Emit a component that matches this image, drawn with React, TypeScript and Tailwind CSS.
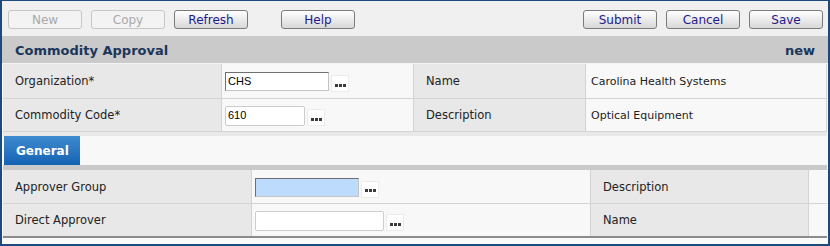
import React from 'react'

const LABEL = "bg-[#e8e8e8] border-r border-[#d4d4d4] flex items-center pl-[12px] pt-[2px] text-[11.5px] text-[#222]"
const VALUE = "bg-[#f8f8f8] border-r border-[#d4d4d4] flex items-center"

function Btn({ label, disabled }: { label: string; disabled?: boolean }) {
  return (
    <button
      className={`block h-[19px] w-[74px] rounded-[3px] border text-[12px] leading-none ${
        disabled
          ? 'border-[#c6c6c6] bg-[#f3f3f3] text-[#a9a9a9]'
          : 'border-[#7b7b7b] bg-linear-to-b from-white to-[#d8d8d8] text-[#1e1a8c]'
      }`}
    >
      {label}
    </button>
  )
}

function Dots() {
  return (
    <div className="mt-[4px] flex h-[17px] w-[18px] items-center justify-center gap-[1px] border border-[#ececec] bg-white pt-[3px]">
      <span className="h-[3px] w-[3px] bg-[#3a3a3a]" />
      <span className="h-[3px] w-[3px] bg-[#3a3a3a]" />
      <span className="h-[3px] w-[3px] bg-[#3a3a3a]" />
    </div>
  )
}

function Lookup({ value, width, variant }: { value?: string; width: number; variant: 'inset' | 'round' | 'blue' }) {
  const cls =
    variant === 'inset'
      ? 'h-[19px] border border-t-[#6f6f6f] border-l-[#6f6f6f] border-b-[#c4c4c4] border-r-[#c4c4c4] bg-white'
      : variant === 'blue'
        ? 'h-[19px] border border-t-[#6f6f6f] border-l-[#6f6f6f] border-b-[#c4c4c4] border-r-[#c4c4c4] bg-[#bddcfd]'
        : 'h-[20px] rounded-[2px] border border-[#cdcdcd] bg-white'
  return (
    <div className="flex items-center gap-[2px] pl-[3px] pt-[1px]">
      <div
        className={`${cls} flex items-center pl-[2px] font-['Liberation_Sans',sans-serif] text-[11px] text-black`}
        style={{ width }}
      >
        {value}
      </div>
      <Dots />
    </div>
  )
}

export default function App() {
  return (
    <div className="box-border flex h-[246px] w-[830px] flex-col border-2 border-t-[1px] border-[#1c4a7a] bg-[#f9f9f9] font-['DejaVu_Sans',sans-serif]">
      {/* toolbar */}
      <div className="flex h-[35px] shrink-0 items-start bg-[#f0f0f0] pl-[6px] pr-[5px] pt-[9px]">
        <div className="flex gap-[9px]">
          <Btn label="New" disabled />
          <Btn label="Copy" disabled />
          <Btn label="Refresh" />
        </div>
        <div className="ml-[33px] flex">
          <Btn label="Help" />
        </div>
        <div className="ml-auto flex gap-[9px]">
          <Btn label="Submit" />
          <Btn label="Cancel" />
          <Btn label="Save" />
        </div>
      </div>

      {/* title bar */}
      <div className="flex h-[28px] shrink-0 items-center justify-between border-b border-[#f4f4f4] bg-[#c9cac9] pl-[13px] pr-[13px] pt-[2px] text-[13px] font-bold text-[#1b365d]">
        <span>Commodity Approval</span>
        <span>new</span>
      </div>

      <div className="px-[1px]">
        <div className="grid h-[35px] grid-cols-[219px_192px_172px_241px] border-b border-[#d4d4d4]">
          <div className={LABEL}>Organization*</div>
          <div className={VALUE}>
            <Lookup value="CHS" width={104} variant="inset" />
          </div>
          <div className={LABEL}>Name</div>
          <div className={`${VALUE} pl-[5px] pt-[2px] text-[11px] text-[#222]`}>Carolina Health Systems</div>
        </div>
        <div className="grid h-[33px] grid-cols-[219px_192px_172px_241px] border-b border-[#d4d4d4]">
          <div className={LABEL}>Commodity Code*</div>
          <div className={VALUE}>
            <Lookup value="610" width={80} variant="round" />
          </div>
          <div className={LABEL}>Description</div>
          <div className={`${VALUE} pl-[5px] pt-[2px] text-[11px] text-[#222]`}>Optical Equipment</div>
        </div>

        <div className="h-[4px] bg-[#e8e8e8]" />

        {/* tabs */}
        <div className="flex h-[29px] bg-[#f8f8f8] pl-[1px]">
          <div className="flex w-[76px] items-center bg-linear-to-b from-[#3f8bd0] to-[#1262b2] pl-[12px] pt-[1px] text-[12px] font-bold text-white">
            General
          </div>
        </div>
        <div className="h-[5px] bg-[#c8c9c8]" />

        <div className="grid h-[34px] grid-cols-[249px_339px_218px_18px] border-b border-[#d4d4d4]">
          <div className={LABEL}>Approver Group</div>
          <div className={VALUE}>
            <Lookup width={104} variant="blue" />
          </div>
          <div className={LABEL}>Description</div>
          <div className="bg-[#f8f8f8]" />
        </div>
        <div className="grid h-[34px] grid-cols-[249px_339px_218px_18px] border-b-2 border-[#8c8c8c]">
          <div className={LABEL}>Direct Approver</div>
          <div className={VALUE}>
            <Lookup width={129} variant="round" />
          </div>
          <div className={LABEL}>Name</div>
          <div className="bg-[#f8f8f8]" />
        </div>
      </div>
    </div>
  )
}
